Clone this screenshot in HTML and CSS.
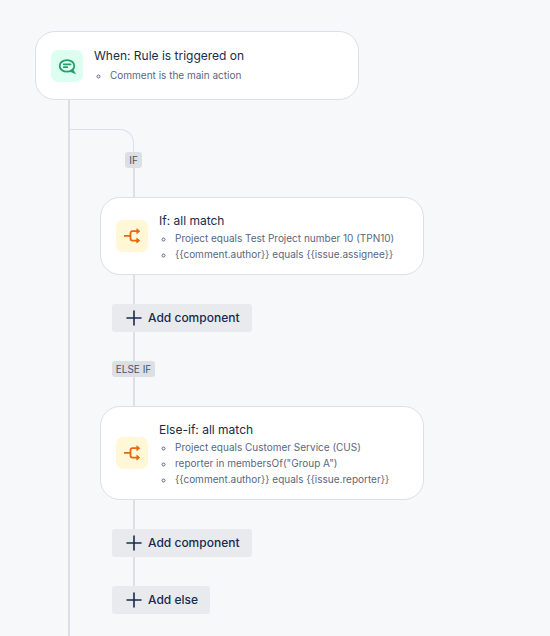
FILE: index.html
```
<!DOCTYPE html>
<html lang="en">
<head>
    <meta charset="UTF-8">
    <meta name="viewport" content="width=device-width, initial-scale=1.0">
    <title>Automation rule</title>
    <link rel="stylesheet" href="styles.css">
</head>
<body>
    <main class="rule">
        <section class="card trigger">
            <span class="icon icon-green">
                <svg width="20" height="20" viewBox="0 0 20 20" fill="none" stroke="#22a06b" stroke-width="1.8" stroke-linecap="round">
                    <path d="M14.6 14.3C13.4 15.2 11.8 15.7 10 15.7C5.8 15.7 2.7 13.1 2.7 9.9S5.8 4.1 10 4.1S17.3 6.7 17.3 9.9C17.3 11.4 16.6 12.8 15.4 13.8L17 16.4L13.8 15.2"/>
                    <path d="M6.8 8.3H13.6M6.8 11.2H10.2" stroke-width="1.7"/>
                </svg>
            </span>
            <div class="details">
                <h2>When: Rule is triggered on</h2>
                <ul>
                    <li>Comment is the main action</li>
                </ul>
            </div>
        </section>

        <div class="branch">
            <div class="elbow"></div>
            <div class="tag-row"><span class="tag">IF</span></div>
            <div class="line"></div>

            <section class="card">
                <span class="icon icon-yellow">
                    <svg width="20" height="20" viewBox="0 0 20 20" fill="none" stroke="#e56910" stroke-width="1.8">
                        <path d="M2 9.8H8.5M15 5.2H10.5Q8.5 5.2 8.5 7.2V12.6Q8.5 14.6 10.5 14.6H15"/>
                        <path d="M14.8 2.8L17.8 5.2L14.8 7.6ZM14.8 12.2L17.8 14.6L14.8 17Z" fill="#e56910" stroke-width="0.8" stroke-linejoin="round"/>
                    </svg>
                </span>
                <div class="details">
                    <h2>If: all match</h2>
                    <ul>
                        <li>Project equals Test Project number 10 (TPN10)</li>
                        <li>{{comment.author}} equals {{issue.assignee}}</li>
                    </ul>
                </div>
            </section>

            <div class="line"></div>
            <button class="add" type="button">
                <svg width="16" height="16" viewBox="0 0 16 16" stroke="#172b4d" stroke-width="1.6" stroke-linecap="round">
                    <path d="M8 1V15M1 8H15"/>
                </svg>
                <span>Add component</span>
            </button>
            <div class="line"></div>
            <div class="tag-row"><span class="tag">ELSE IF</span></div>
            <div class="line"></div>

            <section class="card">
                <span class="icon icon-yellow">
                    <svg width="20" height="20" viewBox="0 0 20 20" fill="none" stroke="#e56910" stroke-width="1.8">
                        <path d="M2 9.8H8.5M15 5.2H10.5Q8.5 5.2 8.5 7.2V12.6Q8.5 14.6 10.5 14.6H15"/>
                        <path d="M14.8 2.8L17.8 5.2L14.8 7.6ZM14.8 12.2L17.8 14.6L14.8 17Z" fill="#e56910" stroke-width="0.8" stroke-linejoin="round"/>
                    </svg>
                </span>
                <div class="details">
                    <h2>Else-if: all match</h2>
                    <ul>
                        <li>Project equals Customer Service (CUS)</li>
                        <li>reporter in membersOf("Group A")</li>
                        <li>{{comment.author}} equals {{issue.reporter}}</li>
                    </ul>
                </div>
            </section>

            <div class="line"></div>
            <button class="add" type="button">
                <svg width="16" height="16" viewBox="0 0 16 16" stroke="#172b4d" stroke-width="1.6" stroke-linecap="round">
                    <path d="M8 1V15M1 8H15"/>
                </svg>
                <span>Add component</span>
            </button>
            <div class="line"></div>
            <button class="add" type="button">
                <svg width="16" height="16" viewBox="0 0 16 16" stroke="#172b4d" stroke-width="1.6" stroke-linecap="round">
                    <path d="M8 1V15M1 8H15"/>
                </svg>
                <span>Add else</span>
            </button>
        </div>
    </main>
</body>
</html>
```

FILE: styles.css
```
* {
    box-sizing: border-box;
}

body {
    margin: 0;
    background: #f7f8fa;
    color: #172b4d;
    font-family: Inter, "Liberation Sans", sans-serif;
}

.rule {
    display: flex;
    flex-direction: column;
    min-height: 100vh;
    padding: 31px 35px 0;
}

/* Rule cards */
.card {
    display: flex;
    align-items: center;
    gap: 11px;
    width: 100%;
    max-width: 324px;
    padding: 12px 15px;
    background: #ffffff;
    border: 1px solid #dcdfe4;
    border-radius: 20px;
}

.trigger {
    padding: 13px 15px;
}

.trigger .details {
    padding-bottom: 3px;
}

.icon {
    display: flex;
    flex: none;
    align-items: center;
    justify-content: center;
    width: 32px;
    height: 32px;
    border-radius: 7px;
}

.icon-green {
    background: #dcfff1;
}

.icon-yellow {
    background: #fff7d6;
}

h2 {
    margin: 0;
    padding-top: 2px;
    font-size: 12px;
    font-weight: 400;
    line-height: 18px;
}

ul {
    margin: 0;
    padding-left: 16px;
    list-style: circle;
    color: #596780;
    font-size: 10px;
    line-height: 16px;
}

.trigger ul {
    margin-top: 2px;
}

/* Branch with its own line, hanging off the main one */
.branch {
    flex: 1;
    display: flex;
    flex-direction: column;
    align-items: flex-start;
    margin-left: 33px;
    padding: 29px 0 21px;
    border-left: 2px solid #dcdfe6;
}

.branch .card {
    margin-left: 30px;
}

.elbow {
    width: 64px;
    height: 23px;
    border: solid #dcdfe4;
    border-width: 1px 1px 0 0;
    border-top-right-radius: 14px;
}

.line {
    width: 2px;
    height: 29px;
    margin-left: 63px;
    background: #dcdfe6;
}

.tag-row {
    display: flex;
    justify-content: center;
    width: 127px;
}

.tag {
    padding: 0 4px;
    background: #dcdfe4;
    border-radius: 3px;
    color: #44546f;
    font-size: 10px;
    line-height: 16px;
}

.add {
    display: flex;
    align-items: center;
    gap: 6px;
    height: 28px;
    margin-left: 42px;
    padding: 0 12px 0 14px;
    background: #e9eaee;
    border: none;
    border-radius: 3px;
    color: #172b4d;
    font-family: inherit;
    font-size: 12px;
    font-weight: 500;
    cursor: pointer;
}

.add span {
    padding-bottom: 2px;
}

.add:hover {
    background: #dcdfe4;
}
```
